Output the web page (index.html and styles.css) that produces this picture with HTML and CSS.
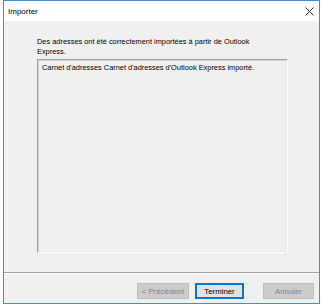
FILE: index.html
```html
<!DOCTYPE html>
<html lang="fr">
<head>
<meta charset="utf-8">
<title>Importer</title>
<link rel="stylesheet" href="styles.css">
</head>
<body>
<div class="window">
  <div class="titlebar">
    <span class="title">Importer</span>
    <svg class="close" width="9" height="9" viewBox="0 0 9 9"><path d="M0.5 0.5 L8.5 8.5 M8.5 0.5 L0.5 8.5" stroke="#333" stroke-width="1" fill="none"/></svg>
  </div>
  <div class="body">
    <div class="content">
      <p class="message">Des adresses ont été correctement importées à partir de Outlook Express.</p>
      <div class="listbox">Carnet d'adresses Carnet d'adresses d'Outlook Express importé.</div>
    </div>
    <div class="separator"></div>
    <div class="footer">
      <button class="btn disabled">&lt; Précédent</button>
      <button class="btn default">Terminer</button>
      <button class="btn disabled cancel">Annuler</button>
    </div>
  </div>
</div>
</body>
</html>
```

FILE: styles.css
```css
html, body {
  margin: 0;
  padding: 0;
  background: #ffffff;
}
body {
  font-family: "Liberation Sans", Arial, sans-serif;
  font-size: 7.4px;
  color: #000;
}
.window {
  margin-left: 3px;
  width: 315px;
  height: 302px;
  border: 1px solid #3c8fd8;
  display: flex;
  flex-direction: column;
}
.titlebar {
  height: 20px;
  background: #fff;
  display: flex;
  align-items: center;
  justify-content: space-between;
  padding-left: 4px;
  padding-right: 5px;
  font-size: 8px;
}
.close {
  display: block;
}
.body {
  flex: 1;
  background: #f0f0f0;
  display: flex;
  flex-direction: column;
}
.content {
  flex: 1;
  padding: 16px 31px 0 33px;
  display: flex;
  flex-direction: column;
}
.message {
  margin: 0;
  line-height: 10px;
  padding-right: 20px;
}
.listbox {
  margin-top: 2px;
  height: 186px;
  border-style: solid;
  border-width: 1px;
  border-color: #a0a0a0 #ffffff #ffffff #a0a0a0;
  box-shadow: inset 1px 1px 0 #d4d4d4, inset -1px -1px 0 #e8e8e8;
  padding: 3px 4px;
  line-height: 10px;
  background: #f0f0f0;
}
.separator {
  height: 1px;
  background: #a0a0a0;
  border-bottom: 1px solid #fff;
}
.footer {
  height: 29px;
  display: flex;
  justify-content: flex-end;
  align-items: flex-start;
  padding: 9px 5px 0 0;
  box-sizing: border-box;
}
.btn {
  font-family: "Liberation Sans", Arial, sans-serif;
  font-size: 7.8px;
  height: 16px;
  width: 52px;
  padding: 0;
  margin: 0;
  border: 1px solid #adadad;
  background: #e1e1e1;
  color: #000;
  box-sizing: border-box;
}
.btn.disabled {
  background: #cccccc;
  border-color: #bfbfbf;
  color: #838383;
}
.btn.default {
  margin-left: 6px;
  width: 49px;
  border: 1px solid #0078d7;
  box-shadow: inset 0 0 0 1px #0078d7;
}
.btn.cancel {
  margin-left: 19px;
  width: 51px;
}
```
